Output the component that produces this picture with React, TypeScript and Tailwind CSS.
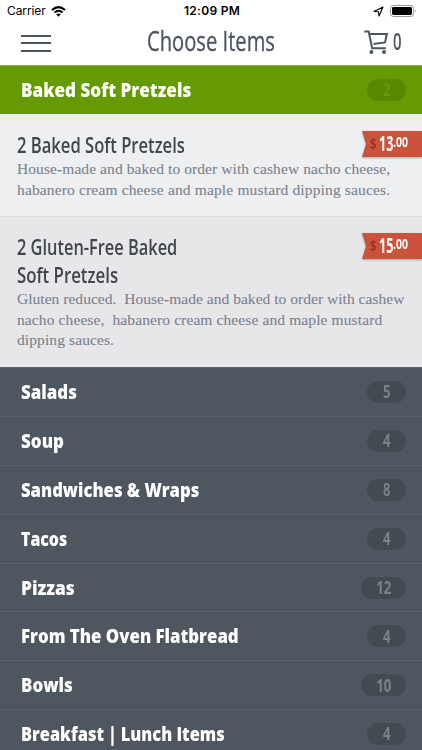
import React from 'react'
import clsx from 'clsx'

type Line = {
    text: string;
    fit: string;
}

type MenuItem = {
    title: Line[];
    description: Line[];
    dollars: string;
    cents: string;
}

type Category = {
    name: string;
    count: number;
    fit: string;
}

const items: MenuItem[] = [
    {
        title: [{ text: '2 Baked Soft Pretzels', fit: 'scale-x-[0.79]' }],
        description: [
            { text: 'House-made and baked to order with cashew nacho cheese,', fit: 'tracking-[0.08px]' },
            { text: 'habanero cream cheese and maple mustard dipping sauces.', fit: 'tracking-[0.15px]' },
        ],
        dollars: '13',
        cents: '.00',
    },
    {
        title: [
            { text: '2 Gluten-Free Baked', fit: 'scale-x-[0.78]' },
            { text: 'Soft Pretzels', fit: 'scale-x-[0.8]' },
        ],
        description: [
            { text: 'Gluten reduced.  House-made and baked to order with cashew', fit: 'tracking-[0.03px]' },
            { text: 'nacho cheese,  habanero cream cheese and maple mustard', fit: 'tracking-[0.11px]' },
            { text: 'dipping sauces.', fit: 'tracking-[0.1px]' },
        ],
        dollars: '15',
        cents: '.00',
    },
]

const categories: Category[] = [
    { name: 'Salads', count: 5, fit: 'scale-x-[0.847]' },
    { name: 'Soup', count: 4, fit: 'scale-x-[0.85]' },
    { name: 'Sandwiches & Wraps', count: 8, fit: 'scale-x-[0.833]' },
    { name: 'Tacos', count: 4, fit: 'scale-x-[0.795]' },
    { name: 'Pizzas', count: 12, fit: 'scale-x-[0.865]' },
    { name: 'From The Oven Flatbread', count: 4, fit: 'scale-x-[0.841]' },
    { name: 'Bowls', count: 10, fit: 'scale-x-[0.845]' },
    { name: 'Breakfast | Lunch Items', count: 4, fit: 'scale-x-[0.82]' },
]

const StatusBar: React.FC = () => (
    <div className="grid h-[22px] shrink-0 grid-cols-[1fr_auto_1fr] items-center pl-[7px] pr-[5px] font-['Inter',sans-serif] text-[12px] leading-[22px] text-black">
        <span className="flex items-center gap-[5px]">
            <span className="tracking-[-0.1px]">Carrier</span>
            <svg width="15" height="11" viewBox="0 0 15 11" fill="none" stroke="currentColor" strokeWidth="2">
                <path d="M1 4 Q7.5 -1.8 14 4" />
                <path d="M3.4 6.6 Q7.5 3 11.6 6.6" />
                <path d="M5.2 8.3 Q7.5 6.5 9.8 8.3 L7.5 10.8Z" fill="currentColor" stroke="none" />
            </svg>
        </span>
        <span className="font-semibold tracking-[0.3px]">12:09 PM</span>
        <span className="flex items-center justify-end gap-[6px]">
            <svg width="11" height="11" viewBox="0 0 11 11" fill="none" stroke="currentColor" strokeWidth="1.1" strokeLinejoin="round">
                <path d="M1 5.4 L10 1 L6 10 L5.4 5.7Z" />
            </svg>
            <svg width="27" height="12" viewBox="0 0 27 12">
                <rect x="0.5" y="0.5" width="23" height="11" rx="2.8" fill="none" stroke="#999" />
                <rect x="2" y="2" width="20" height="8" rx="1.4" />
                <path d="M25 4 Q26.5 6 25 8Z" fill="#999" />
            </svg>
        </span>
    </div>
)

const Header: React.FC = () => (
    <header className="grid h-[43px] shrink-0 grid-cols-[1fr_auto_1fr] items-start px-[21px] text-[#4d555f]">
        <button className="mt-[12.5px] flex h-[17px] w-[30px] flex-col justify-between" aria-label="Menu">
            <span className="h-[2px] w-full bg-[#4d555f]" />
            <span className="h-[2px] w-full bg-[#4d555f]" />
            <span className="h-[2px] w-full bg-[#4d555f]" />
        </button>
        <h1 className="w-[128px] whitespace-nowrap text-[27px] leading-[37px] [-webkit-text-stroke:0.3px_#4d555f]">
            <span className="inline-block origin-left scale-x-[0.747]">Choose Items</span>
        </h1>
        <div className="mt-[7.5px] flex items-start justify-end gap-[4px]">
            <svg width="25" height="25" viewBox="0 0 25 25" fill="none" stroke="currentColor" strokeWidth="2">
                <path d="M0.3 1.5 H4.7 L8.1 18.2 H21.8" />
                <path d="M5.3 4 H22.9 L21 12.4 L9.4 14" />
                <circle cx="7.4" cy="22" r="2" fill="currentColor" stroke="none" />
                <circle cx="20" cy="22" r="2" fill="currentColor" stroke="none" />
            </svg>
            <span className="w-[8px] text-[23px] leading-[22px]">
                <span className="inline-block origin-left scale-x-[0.65] font-semibold">0</span>
            </span>
        </div>
    </header>
)

const PriceTag: React.FC<{ dollars: string; cents: string }> = ({ dollars, cents }) => (
    <div className="h-[26px] w-[60px] shrink-0 drop-shadow-[0_1px_1px_rgba(0,0,0,0.3)]">
        <div className="flex h-full items-start bg-[#cb523b] pl-[8px] text-white [clip-path:polygon(0_0,100%_0,100%_100%,0_100%,4px_50%)]">
            <span className="w-[9px] text-[14px] font-semibold leading-[26px] text-[#8c3020]">
                <span className="inline-block origin-left scale-x-[0.8]">$</span>
            </span>
            <span className="w-[14px] text-[21px] font-bold leading-[25px]">
                <span className="inline-block origin-left scale-x-[0.6]">{dollars}</span>
            </span>
            <span className="text-[15px] font-bold leading-[20px]">
                <span className="inline-block origin-left scale-x-[0.7]">{cents}</span>
            </span>
        </div>
    </div>
)

const ItemCard: React.FC<{ item: MenuItem; className: string }> = ({ item, className }) => (
    <article className={clsx('shrink-0 pl-[17px]', className)}>
        <div className="flex items-start justify-between">
            <h3 className="w-[200px] whitespace-nowrap text-[21px] font-semibold leading-[28px] text-[#41464e]">
                {item.title.map((line) => (
                    <span key={line.text} className={clsx('block origin-left', line.fit)}>{line.text}</span>
                ))}
            </h3>
            <PriceTag dollars={item.dollars} cents={item.cents} />
        </div>
        <div className="whitespace-pre font-['Liberation_Serif',serif] text-[15.5px] leading-[20.6px] text-[#7b828e] [-webkit-text-stroke:0.1px_#7b828e]">
            {item.description.map((line) => (
                <p key={line.text} className={line.fit}>{line.text}</p>
            ))}
        </div>
    </article>
)

const CategoryRow: React.FC<{ category: Category; active?: boolean }> = ({ category, active }) => (
    <div
        className={clsx(
            'flex shrink-0 items-center justify-between pl-[21px] pr-[16px]',
            active ? 'h-[49px] border-t border-[#8bb044] bg-[#659b00]' : 'h-[48.9px] border-t border-[#59616b] bg-[#4e565f]'
        )}
    >
        <h2 className={clsx('origin-left whitespace-nowrap text-[20px] font-extrabold leading-[28px] text-white', category.fit)}>
            {category.name}
        </h2>
        <span
            className={clsx(
                'flex h-[22px] items-center justify-center rounded-full text-[17px] font-bold',
                category.count > 9 ? 'w-[45px]' : 'w-[39px]',
                active ? 'bg-[#578800] text-[#659b08]' : 'bg-[#434a52] text-[#79818a]'
            )}
        >
            <span className="scale-x-[0.78]">{category.count}</span>
        </span>
    </div>
)

export default function App() {
    return (
        <main className="flex h-[750px] w-[422px] flex-col overflow-hidden bg-white font-['Open_Sans',sans-serif]">
            <StatusBar />
            <Header />
            <CategoryRow category={{ name: 'Baked Soft Pretzels', count: 2, fit: 'scale-x-[0.854]' }} active />
            <ItemCard item={items[0]} className="h-[103px] border-b border-[#dadbdd] bg-[#eeeff1] pt-[17px]" />
            <ItemCard item={items[1]} className="h-[150px] bg-[#e7e7e9] pt-[16px]" />
            {categories.map((category) => (
                <CategoryRow key={category.name} category={category} />
            ))}
        </main>
    )
}
